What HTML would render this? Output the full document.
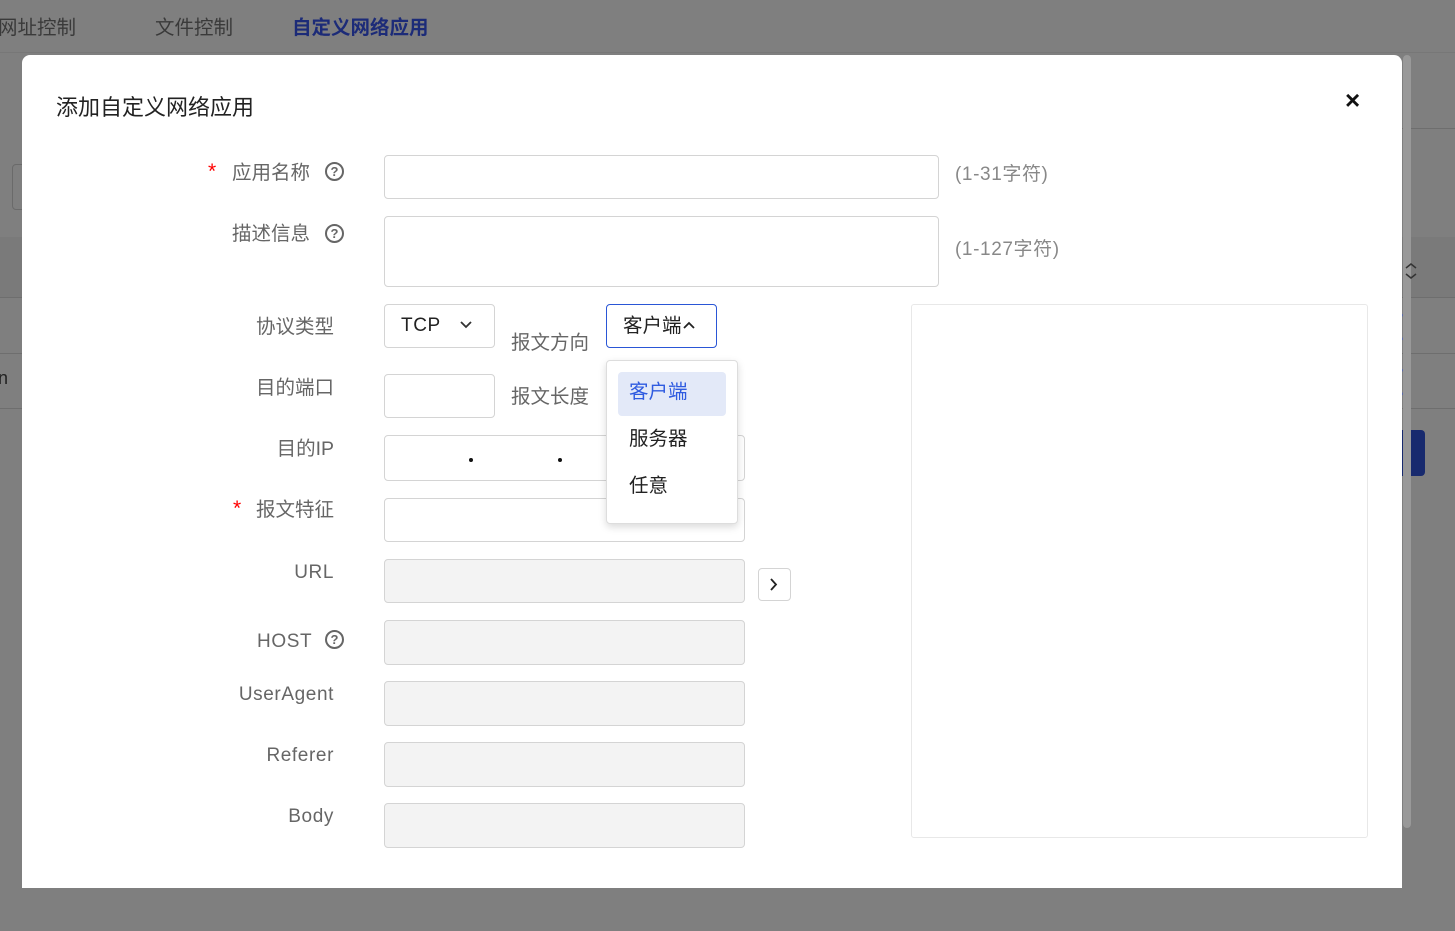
<!DOCTYPE html>
<html><head><meta charset="utf-8">
<style>
*{box-sizing:border-box;margin:0;padding:0}
body{width:1455px;height:931px;overflow:hidden;background:#7f7f7f;position:relative;font-family:"Liberation Sans","Noto Sans CJK SC",sans-serif}
.a{position:absolute;white-space:nowrap}
.nav{font-size:19.5px;color:#3a3a3a;top:11px}
.modal{position:absolute;left:22px;top:55px;width:1380px;height:833px;background:#fff;border-radius:8px 8px 0 0}
.lbl{position:absolute;font-size:19.5px;color:#666;line-height:24px;white-space:nowrap}
.lat{font-size:19px;letter-spacing:0.6px}
.r{text-align:right}
.inp{position:absolute;border:1px solid #d4d4d4;border-radius:4px;background:#fff}
.dis{background:#f3f3f3}
.q{position:absolute;width:19px;height:19px;border:2px solid #666;border-radius:50%;font-size:13px;font-weight:bold;color:#666;text-align:center;line-height:15px}
.star{position:absolute;color:#f00;font-size:21px}
</style></head><body>
<div class="a nav" style="left:-2px">网址控制</div>
<div class="a nav" style="left:155px">文件控制</div>
<div class="a nav" style="left:292px;color:#1c2b78;font-weight:bold">自定义网络应用</div>
<div class="a" style="left:0;top:52px;width:1455px;height:1px;background:#777"></div>
<div class="a" style="left:1402px;top:128px;width:53px;height:1px;background:#6e6e6e"></div>
<div class="a" style="left:0;top:237px;width:1455px;height:60px;background:#7a7a7a"></div>
<div class="a" style="left:0;top:297px;width:1455px;height:1px;background:#6e6e6e"></div>
<div class="a" style="left:0;top:353px;width:1455px;height:1px;background:#6e6e6e"></div>
<div class="a" style="left:0;top:408px;width:1455px;height:1px;background:#6e6e6e"></div>
<div class="a" style="left:12px;top:164px;width:20px;height:46px;border:1px solid #6a6a6a;border-radius:4px"></div>
<div class="a" style="left:-2px;top:368px;font-size:18px;color:#222">n</div>
<div class="a" style="left:1380px;top:430px;width:45px;height:46px;background:#182a6e;border-radius:4px"></div>
<div class="a" style="left:1380px;top:312px;width:30px;height:30px;border:2px solid #5a6aa8;border-radius:50%"></div>
<div class="a" style="left:1380px;top:367px;width:30px;height:30px;border:2px solid #5a6aa8;border-radius:50%"></div>
<div class="a" style="left:1403px;top:55px;width:8px;height:773px;background:#999;border-radius:4px"></div>
<svg class="a" style="left:1404px;top:262px" width="14" height="18"><path d="M2 6l5-4 5 4M2 12l5 4 5-4" fill="none" stroke="#333" stroke-width="1.5"/></svg>

<div class="modal"></div>
<div class="a" style="left:56px;top:90px;font-size:22px;color:#222">添加自定义网络应用</div>
<div class="a" style="left:1345px;top:85px;font-size:26px;font-weight:bold;color:#111">×</div>

<span class="star" style="left:208px;top:160px">*</span>
<div class="lbl" style="left:232px;top:161px">应用名称</div><div class="q" style="left:325px;top:162px">?</div>
<div class="lbl" style="left:232px;top:222px">描述信息</div><div class="q" style="left:325px;top:224px">?</div>
<div class="lbl r" style="left:200px;width:134px;top:315px">协议类型</div>
<div class="lbl r" style="left:200px;width:134px;top:376px">目的端口</div>
<div class="lbl r" style="left:200px;width:134px;top:437px">目的IP</div>
<span class="star" style="left:233px;top:497px">*</span>
<div class="lbl r" style="left:200px;width:134px;top:498px">报文特征</div>
<div class="lbl r lat" style="left:200px;width:134px;top:561px">URL</div>
<div class="lbl lat" style="left:257px;top:630px">HOST</div><div class="q" style="left:325px;top:630px">?</div>
<div class="lbl r lat" style="left:200px;width:134px;top:683px">UserAgent</div>
<div class="lbl r lat" style="left:200px;width:134px;top:744px">Referer</div>
<div class="lbl r lat" style="left:200px;width:134px;top:805px">Body</div>

<div class="inp" style="left:384px;top:155px;width:555px;height:44px"></div>
<div class="lbl lat" style="left:955px;top:163px;color:#888">(1-31字符)</div>
<div class="inp" style="left:384px;top:216px;width:555px;height:71px"></div>
<div class="lbl lat" style="left:955px;top:238px;color:#888">(1-127字符)</div>

<div class="inp" style="left:384px;top:304px;width:111px;height:44px"></div>
<div class="lbl lat" style="left:401px;top:314px;color:#222">TCP</div>
<svg class="a" style="left:460px;top:321px" width="12" height="8"><path d="M1 1l5 5 5-5" fill="none" stroke="#333" stroke-width="1.8"/></svg>
<div class="lbl" style="left:511px;top:331px">报文方向</div>
<div class="inp" style="left:606px;top:304px;width:111px;height:44px;border-color:#2a56d6"></div>
<div class="lbl" style="left:623px;top:314px;color:#222">客户端</div>
<svg class="a" style="left:683px;top:321px" width="12" height="8"><path d="M1 7l5-5 5 5" fill="none" stroke="#222" stroke-width="1.8"/></svg>

<div class="inp" style="left:384px;top:374px;width:111px;height:44px"></div>
<div class="lbl" style="left:511px;top:385px">报文长度</div>
<div class="inp" style="left:384px;top:435px;width:361px;height:46px"></div>
<div class="a" style="left:469px;top:458px;width:4px;height:4px;background:#111;border-radius:50%"></div>
<div class="a" style="left:558px;top:458px;width:4px;height:4px;background:#111;border-radius:50%"></div>
<div class="inp" style="left:384px;top:498px;width:361px;height:44px"></div>
<div class="inp dis" style="left:384px;top:559px;width:361px;height:44px"></div>
<div class="inp" style="left:758px;top:568px;width:33px;height:33px"></div>
<svg class="a" style="left:770px;top:578px" width="8" height="13"><path d="M1 1l5 5.5-5 5.5" fill="none" stroke="#222" stroke-width="1.8"/></svg>
<div class="inp dis" style="left:384px;top:620px;width:361px;height:45px"></div>
<div class="inp dis" style="left:384px;top:681px;width:361px;height:45px"></div>
<div class="inp dis" style="left:384px;top:742px;width:361px;height:45px"></div>
<div class="inp dis" style="left:384px;top:803px;width:361px;height:45px"></div>

<div class="a" style="left:911px;top:304px;width:457px;height:534px;border:1px solid #e8e8e8;border-radius:3px"></div>

<div class="a" style="left:606px;top:360px;width:132px;height:164px;background:#fff;border:1px solid #ddd;border-radius:4px;box-shadow:0 3px 8px rgba(0,0,0,.15)"></div>
<div class="a" style="left:618px;top:372px;width:108px;height:44px;background:#e3e9f8;border-radius:4px"></div>
<div class="lbl" style="left:629px;top:380px;color:#2f5be0">客户端</div>
<div class="lbl" style="left:629px;top:427px;color:#222">服务器</div>
<div class="lbl" style="left:629px;top:474px;color:#222">任意</div>
</body></html>
